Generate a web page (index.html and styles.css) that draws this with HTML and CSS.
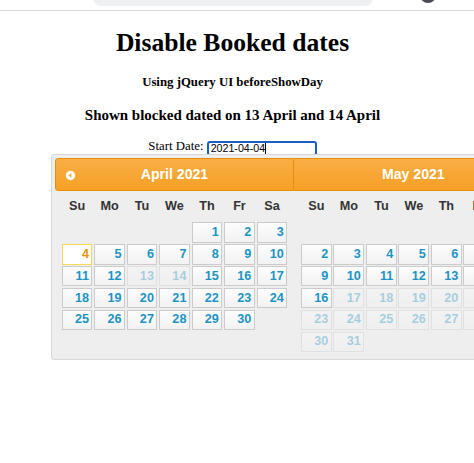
FILE: index.html
```html
<!DOCTYPE html>
<html>
<head>
<meta charset="utf-8">
<link rel="stylesheet" href="styles.css">
</head>
<body>
<div class="chrome">
  <div class="pill"></div>
  <div class="avatar"></div>
</div>
<div class="page">
  <h1>Disable Booked dates</h1>
  <h4>Using jQuery UI beforeShowDay</h4>
  <h3>Shown blocked dated on 13 April and 14 April</h3>
  <p class="field">Start Date: <span class="input">2021-04-04<span class="caret"></span></span></p>
</div>

<div class="dp">
  <div class="group">
    <div class="hdr hdr-first">
      <span class="prev"><svg width="11" height="11" viewBox="0 0 11 11"><circle cx="5.5" cy="5.5" r="4.7" fill="#fff"/><path d="M3.6 5.5 L6.4 3.3 L6.4 7.7 Z" fill="#f6a828"/></svg></span>
      <div class="title">April 2021</div>
    </div>
    <table class="cal">
      <thead><tr><th>Su</th><th>Mo</th><th>Tu</th><th>We</th><th>Th</th><th>Fr</th><th>Sa</th></tr></thead>
      <tbody>
        <tr><td></td><td></td><td></td><td></td><td><span class="d">1</span></td><td><span class="d">2</span></td><td><span class="d">3</span></td></tr>
        <tr><td><span class="d active">4</span></td><td><span class="d">5</span></td><td><span class="d">6</span></td><td><span class="d">7</span></td><td><span class="d">8</span></td><td><span class="d">9</span></td><td><span class="d">10</span></td></tr>
        <tr><td><span class="d">11</span></td><td><span class="d">12</span></td><td class="off"><span class="d">13</span></td><td class="off"><span class="d">14</span></td><td><span class="d">15</span></td><td><span class="d">16</span></td><td><span class="d">17</span></td></tr>
        <tr><td><span class="d">18</span></td><td><span class="d">19</span></td><td><span class="d">20</span></td><td><span class="d">21</span></td><td><span class="d">22</span></td><td><span class="d">23</span></td><td><span class="d">24</span></td></tr>
        <tr><td><span class="d">25</span></td><td><span class="d">26</span></td><td><span class="d">27</span></td><td><span class="d">28</span></td><td><span class="d">29</span></td><td><span class="d">30</span></td><td></td></tr>
      </tbody>
    </table>
  </div>
  <div class="group">
    <div class="hdr hdr-last">
      <div class="title">May 2021</div>
    </div>
    <table class="cal">
      <thead><tr><th>Su</th><th>Mo</th><th>Tu</th><th>We</th><th>Th</th><th>Fr</th><th>Sa</th></tr></thead>
      <tbody>
        <tr><td></td><td></td><td></td><td></td><td></td><td></td><td><span class="d">1</span></td></tr>
        <tr><td><span class="d">2</span></td><td><span class="d">3</span></td><td><span class="d">4</span></td><td><span class="d">5</span></td><td><span class="d">6</span></td><td><span class="d">7</span></td><td><span class="d">8</span></td></tr>
        <tr><td><span class="d">9</span></td><td><span class="d">10</span></td><td><span class="d">11</span></td><td><span class="d">12</span></td><td><span class="d">13</span></td><td><span class="d">14</span></td><td><span class="d">15</span></td></tr>
        <tr><td><span class="d">16</span></td><td class="off"><span class="d">17</span></td><td class="off"><span class="d">18</span></td><td class="off"><span class="d">19</span></td><td class="off"><span class="d">20</span></td><td class="off"><span class="d">21</span></td><td class="off"><span class="d">22</span></td></tr>
        <tr><td class="off"><span class="d">23</span></td><td class="off"><span class="d">24</span></td><td class="off"><span class="d">25</span></td><td class="off"><span class="d">26</span></td><td class="off"><span class="d">27</span></td><td class="off"><span class="d">28</span></td><td class="off"><span class="d">29</span></td></tr>
        <tr><td class="off"><span class="d">30</span></td><td class="off"><span class="d">31</span></td><td></td><td></td><td></td><td></td><td></td></tr>
      </tbody>
    </table>
  </div>
</div>
</body>
</html>
```
FILE: styles.css
```css
html {
  overflow: hidden;
  background: #fff;
}
body {
  margin: 0;
  font-family: "Liberation Serif", "Times New Roman", serif;
  color: #000;
}
.chrome {
  height: 10px;
  border-bottom: 1px solid #dadada;
  display: flex;
  align-items: flex-end;
  overflow: hidden;
  position: relative;
}
.pill {
  margin-left: 93px;
  width: 280px;
  height: 20px;
  margin-bottom: 4px;
  border-radius: 8px;
  background: #eff0f2;
}
.avatar {
  margin-left: 47px;
  width: 16px;
  height: 16px;
  margin-bottom: 7px;
  border-radius: 50%;
  background: #4a4a55;
}
.page {
  padding: 0 15.4px 0 6.4px;
  text-align: center;
}
h1 {
  font-size: 25.6px;
  margin: 17.15px 0;
  font-weight: bold;
}
h4 {
  font-size: 12.8px;
  margin: 17.05px 0;
}
h3 {
  font-size: 14.98px;
  margin: 14.98px 0;
}
.field {
  font-size: 12.8px;
  margin: 12.8px 0;
}
.input {
  display: inline-block;
  vertical-align: -2px;
  box-sizing: border-box;
  width: 110px;
  height: 15px;
  border: 2px solid #1b5fc6;
  border-radius: 3px;
  padding: 0 2px;
  font-family: "Liberation Sans", Arial, sans-serif;
  font-size: 10.67px;
  line-height: 11px;
  text-align: left;
  color: #000;
}
.caret {
  display: inline-block;
  width: 1px;
  height: 11px;
  background: #000;
  vertical-align: -2px;
}
.dp {
  position: absolute;
  left: 51px;
  top: 154px;
  display: flex;
  padding: 2.8px;
  border: 1px solid #d8d8d8;
  border-radius: 3px;
  background: #eee;
  font-family: "Liberation Sans", "Trebuchet MS", Arial, sans-serif;
  font-size: 14.08px;
}
.group {
  width: 239.4px;
  flex: none;
}
.hdr {
  position: relative;
  padding: 2.8px 0;
  border: 1px solid #e78f08;
  background: linear-gradient(#f9ae46, #f7a633 55%, #f6a128);
  color: #fff;
  font-weight: bold;
}
.hdr-first {
  border-radius: 3px 0 0 3px;
}
.hdr-last {
  border-left-width: 0;
  border-radius: 0 3px 3px 0;
}
.title {
  margin: 0 32.4px;
  line-height: 25.34px;
  text-align: center;
}
.prev {
  position: absolute;
  left: 9px;
  top: 11px;
  width: 11px;
  height: 11px;
  display: flex;
}
.cal {
  width: 227.4px;
  margin: 0 auto 3px;
  border-collapse: collapse;
  font-size: 12.67px;
  table-layout: fixed;
}
.cal th {
  padding: 8.87px 3.8px;
  line-height: 13px;
  text-align: center;
  font-weight: bold;
  color: #333;
}
.cal td {
  padding: 0.8px;
}
.cal td.off {
  opacity: 0.35;
}
.d {
  display: block;
  padding: 2.53px;
  line-height: 13.3px;
  text-align: right;
  border: 1px solid #cbcbcb;
  background: linear-gradient(#fdfdfd, #f2f2f2);
  color: #1c94c4;
  font-weight: bold;
}
.d.active {
  border-color: #fbd850;
  background: #fff;
  color: #eb8f00;
}
```
